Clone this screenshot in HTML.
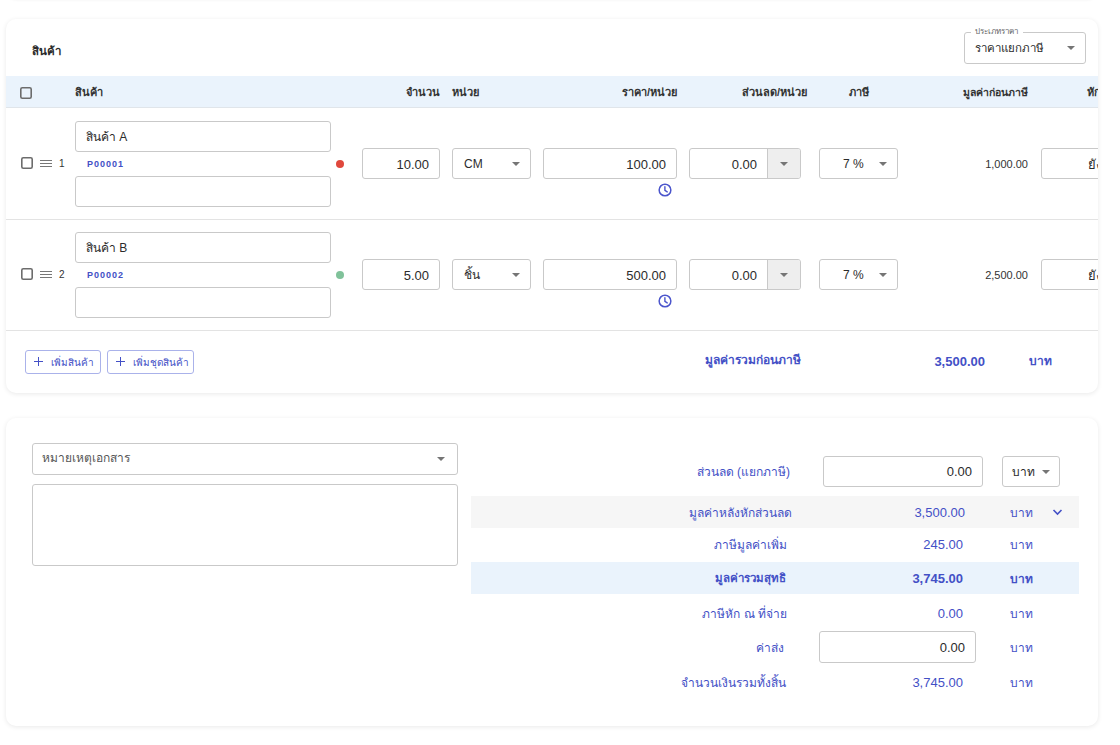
<!DOCTYPE html>
<html><head><meta charset="utf-8">
<style>
*{box-sizing:border-box;margin:0;padding:0}
html,body{width:1120px;height:745px;overflow:hidden;background:#fff;font-family:"Liberation Sans",sans-serif;color:#333;position:relative}
.a{position:absolute}
.card{position:absolute;left:6px;width:1092px;background:#fff;border-radius:10px;box-shadow:0 1px 5px rgba(0,0,0,0.09);overflow:hidden}
.inp{position:absolute;border:1px solid #c9c9c9;border-radius:3px;background:#fff}
.t{position:absolute;white-space:nowrap;line-height:1}
.r{text-align:right}
.blue{color:#4350c6}
.arrow{position:absolute;width:0;height:0;border-left:4px solid transparent;border-right:4px solid transparent;border-top:4px solid #757575}
.cb{position:absolute;width:12px;height:12px}
.hd{position:absolute;white-space:nowrap;line-height:1;font-size:11px;font-weight:bold;color:#333;top:87px}
</style></head><body>
<div class="card" style="top:-41px;height:41px;box-shadow:0 0 3px rgba(0,0,0,0.06)"></div>
<div class="card" style="top:19px;height:374px"><div class="a" style="left:-6px;top:-19px;width:1120px;height:745px">
<div class="t" style="left:32px;top:46px;font-size:11.5px;font-weight:bold;color:#2b2b2b">สินค้า</div>
<div class="inp" style="left:964px;top:32px;width:122px;height:32px"></div>
<div class="t" style="left:971px;top:28px;font-size:8px;color:#666;background:#fff;padding:0 5px 0 4px">ประเภทราคา</div>
<div class="t" style="left:975px;top:43px;font-size:11.5px;color:#2b2b2b">ราคาแยกภาษี</div>
<div class="arrow" style="left:1067px;top:46px"></div>
<div class="a" style="left:6px;top:76px;width:1092px;height:32px;background:#eaf3fc;border-bottom:1px solid #e0e5ea"></div>
<svg class="cb" style="left:20px;top:87px" viewBox="0 0 12 12"><rect x="0.8" y="0.8" width="10.4" height="10.4" rx="1.5" fill="none" stroke="#6c6c6c" stroke-width="1.6"/></svg>
<div class="hd" style="left:75px">สินค้า</div>
<div class="hd r" style="left:340px;width:100px">จำนวน</div>
<div class="hd" style="left:452px">หน่วย</div>
<div class="hd r" style="left:577px;width:100px">ราคา/หน่วย</div>
<div class="hd r" style="left:707px;width:100px">ส่วนลด/หน่วย</div>
<div class="hd" style="left:849px">ภาษี</div>
<div class="hd r" style="left:908px;width:120px;font-size:10.5px">มูลค่าก่อนภาษี</div>
<div class="hd" style="left:1087px">หัก</div>
<svg class="cb" style="left:21px;top:157px" viewBox="0 0 12 12"><rect x="0.8" y="0.8" width="10.4" height="10.4" rx="1.5" fill="none" stroke="#6c6c6c" stroke-width="1.6"/></svg>
<div class="a" style="left:40px;top:160px;width:12px;height:1px;background:#777"></div>
<div class="a" style="left:40px;top:163px;width:12px;height:1px;background:#777"></div>
<div class="a" style="left:40px;top:166px;width:12px;height:1px;background:#777"></div>
<div class="t" style="left:59px;top:159px;font-size:10px;color:#333">1</div>
<div class="inp" style="left:75px;top:121px;width:256px;height:31px"></div>
<div class="t" style="left:86px;top:131px;font-size:12px;color:#2b2b2b">สินค้า A</div>
<div class="t blue" style="left:87px;top:160px;font-size:9px;font-weight:bold;letter-spacing:1px">P00001</div>
<div class="inp" style="left:75px;top:176px;width:256px;height:31px"></div>
<div class="a" style="left:336px;top:159.5px;width:8px;height:8px;border-radius:50%;background:#e0483c"></div>
<div class="inp" style="left:362px;top:148px;width:78px;height:31px"></div>
<div class="t r" style="left:362px;width:67px;top:158px;font-size:13px;color:#2b2b2b">10.00</div>
<div class="inp" style="left:452px;top:148px;width:79px;height:31px"></div>
<div class="t" style="left:464px;top:158px;font-size:12px;color:#2b2b2b">CM</div>
<div class="arrow" style="left:512px;top:162px"></div>
<div class="inp" style="left:543px;top:148px;width:134px;height:31px"></div>
<div class="t r" style="left:543px;width:123px;top:158px;font-size:13px;color:#2b2b2b">100.00</div>
<svg class="a" style="left:658.3px;top:183.4px" width="14" height="14" viewBox="0 0 14 14"><circle cx="7" cy="7" r="5.85" fill="none" stroke="#4b55cc" stroke-width="1.5"/><path d="M6.9 3.8v3.5l2.3 1.6" fill="none" stroke="#4b55cc" stroke-width="1.4" stroke-linecap="round"/></svg>
<div class="inp" style="left:689px;top:148px;width:112px;height:31px;overflow:hidden"><div class="a" style="left:77px;top:0;width:35px;height:29px;background:#eeeeee;border-left:1px solid #c9c9c9"></div></div>
<div class="t r" style="left:689px;width:68px;top:158px;font-size:13px;color:#2b2b2b">0.00</div>
<div class="arrow" style="left:780px;top:162px"></div>
<div class="inp" style="left:819px;top:148px;width:79px;height:31px"></div>
<div class="t" style="left:843px;top:158px;font-size:12px;color:#2b2b2b">7 %</div>
<div class="arrow" style="left:879px;top:162px"></div>
<div class="t r" style="left:928px;width:100px;top:159px;font-size:11px;color:#333">1,000.00</div>
<div class="inp" style="left:1041px;top:148px;width:100px;height:31px"></div>
<div class="t" style="left:1088px;top:158px;font-size:13px;color:#2b2b2b">ยังไม่</div>
<div class="a" style="left:6px;top:219px;width:1092px;height:1px;background:#e3e3e3"></div>
<svg class="cb" style="left:21px;top:268px" viewBox="0 0 12 12"><rect x="0.8" y="0.8" width="10.4" height="10.4" rx="1.5" fill="none" stroke="#6c6c6c" stroke-width="1.6"/></svg>
<div class="a" style="left:40px;top:271px;width:12px;height:1px;background:#777"></div>
<div class="a" style="left:40px;top:274px;width:12px;height:1px;background:#777"></div>
<div class="a" style="left:40px;top:277px;width:12px;height:1px;background:#777"></div>
<div class="t" style="left:59px;top:270px;font-size:10px;color:#333">2</div>
<div class="inp" style="left:75px;top:232px;width:256px;height:31px"></div>
<div class="t" style="left:86px;top:242px;font-size:12px;color:#2b2b2b">สินค้า B</div>
<div class="t blue" style="left:87px;top:271px;font-size:9px;font-weight:bold;letter-spacing:1px">P00002</div>
<div class="inp" style="left:75px;top:287px;width:256px;height:31px"></div>
<div class="a" style="left:336px;top:270.5px;width:8px;height:8px;border-radius:50%;background:#80c29a"></div>
<div class="inp" style="left:362px;top:259px;width:78px;height:31px"></div>
<div class="t r" style="left:362px;width:67px;top:269px;font-size:13px;color:#2b2b2b">5.00</div>
<div class="inp" style="left:452px;top:259px;width:79px;height:31px"></div>
<div class="t" style="left:464px;top:269px;font-size:12px;color:#2b2b2b">ชิ้น</div>
<div class="arrow" style="left:512px;top:273px"></div>
<div class="inp" style="left:543px;top:259px;width:134px;height:31px"></div>
<div class="t r" style="left:543px;width:123px;top:269px;font-size:13px;color:#2b2b2b">500.00</div>
<svg class="a" style="left:658.3px;top:294.4px" width="14" height="14" viewBox="0 0 14 14"><circle cx="7" cy="7" r="5.85" fill="none" stroke="#4b55cc" stroke-width="1.5"/><path d="M6.9 3.8v3.5l2.3 1.6" fill="none" stroke="#4b55cc" stroke-width="1.4" stroke-linecap="round"/></svg>
<div class="inp" style="left:689px;top:259px;width:112px;height:31px;overflow:hidden"><div class="a" style="left:77px;top:0;width:35px;height:29px;background:#eeeeee;border-left:1px solid #c9c9c9"></div></div>
<div class="t r" style="left:689px;width:68px;top:269px;font-size:13px;color:#2b2b2b">0.00</div>
<div class="arrow" style="left:780px;top:273px"></div>
<div class="inp" style="left:819px;top:259px;width:79px;height:31px"></div>
<div class="t" style="left:843px;top:269px;font-size:12px;color:#2b2b2b">7 %</div>
<div class="arrow" style="left:879px;top:273px"></div>
<div class="t r" style="left:928px;width:100px;top:270px;font-size:11px;color:#333">2,500.00</div>
<div class="inp" style="left:1041px;top:259px;width:100px;height:31px"></div>
<div class="t" style="left:1088px;top:269px;font-size:13px;color:#2b2b2b">ยังไม่</div>

<div class="a" style="left:6px;top:330px;width:1092px;height:1px;background:#e3e3e3"></div>
<div class="inp" style="left:25px;top:350px;width:76px;height:24px;border-color:#aab2ea;border-radius:3px"></div>
<div class="a" style="left:34px;top:361px;width:9px;height:1.3px;background:#4350c6"></div>
<div class="a" style="left:37.9px;top:357px;width:1.3px;height:9px;background:#4350c6"></div>
<div class="t blue" style="left:51px;top:358px;font-size:10px">เพิ่มสินค้า</div>
<div class="inp" style="left:107px;top:350px;width:87px;height:24px;border-color:#aab2ea;border-radius:3px"></div>
<div class="a" style="left:116px;top:361px;width:9px;height:1.3px;background:#4350c6"></div>
<div class="a" style="left:119.9px;top:357px;width:1.3px;height:9px;background:#4350c6"></div>
<div class="t blue" style="left:133px;top:358px;font-size:10px">เพิ่มชุดสินค้า</div>
<div class="t r blue" style="left:650px;width:151px;top:354px;font-size:12px;font-weight:bold">มูลค่ารวมก่อนภาษี</div>
<div class="t r blue" style="left:885px;width:100px;top:355px;font-size:13px;font-weight:bold">3,500.00</div>
<div class="t blue" style="left:1029px;top:355px;font-size:12px;font-weight:bold">บาท</div>
</div></div>
<div class="card" style="top:418px;height:308px"><div class="a" style="left:-6px;top:-418px;width:1120px;height:1145px">
<div class="inp" style="left:32px;top:443px;width:426px;height:32px"></div>
<div class="t" style="left:42px;top:452px;font-size:12px;color:#555">หมายเหตุเอกสาร</div>
<div class="arrow" style="left:437px;top:457px"></div>
<div class="inp" style="left:32px;top:484px;width:426px;height:82px"></div>
<div class="a" style="left:471px;top:496px;width:608px;height:32px;background:#f6f6f6"></div>
<div class="a" style="left:471px;top:562px;width:608px;height:32px;background:#eaf3fc"></div>
<div class="t r blue" style="left:590px;width:200px;top:466px;font-size:12px">ส่วนลด (แยกภาษี)</div>
<div class="inp" style="left:823px;top:456px;width:160px;height:31px"></div>
<div class="t r" style="left:823px;width:149px;top:465px;font-size:13px;color:#2b2b2b">0.00</div>
<div class="inp" style="left:1002px;top:456px;width:58px;height:31px"></div>
<div class="t" style="left:1012px;top:466px;font-size:12px;color:#2b2b2b">บาท</div>
<div class="arrow" style="left:1042px;top:470px"></div>
<div class="t r blue" style="left:592px;width:200px;top:507px;font-size:12px">มูลค่าหลังหักส่วนลด</div>
<div class="t r blue" style="left:865px;width:100px;top:506px;font-size:13px">3,500.00</div>
<div class="t blue" style="left:1010px;top:507px;font-size:12px">บาท</div>
<div class="t r blue" style="left:587px;width:200px;top:539px;font-size:12px">ภาษีมูลค่าเพิ่ม</div>
<div class="t r blue" style="left:863px;width:100px;top:538px;font-size:13px">245.00</div>
<div class="t blue" style="left:1010px;top:539px;font-size:12px">บาท</div>
<div class="t r blue" style="left:586px;width:200px;top:573px;font-size:11.5px;font-weight:bold">มูลค่ารวมสุทธิ</div>
<div class="t r blue" style="left:863px;width:100px;top:572px;font-size:13px;font-weight:bold">3,745.00</div>
<div class="t blue" style="left:1010px;top:573px;font-size:12px;font-weight:bold">บาท</div>
<div class="t r blue" style="left:587px;width:200px;top:608px;font-size:12px">ภาษีหัก ณ ที่จ่าย</div>
<div class="t r blue" style="left:863px;width:100px;top:607px;font-size:13px">0.00</div>
<div class="t blue" style="left:1010px;top:608px;font-size:12px">บาท</div>
<div class="t r blue" style="left:584px;width:200px;top:642px;font-size:12px">ค่าส่ง</div>
<div class="t blue" style="left:1010px;top:642px;font-size:12px">บาท</div>
<div class="t r blue" style="left:586px;width:200px;top:677px;font-size:12px">จำนวนเงินรวมทั้งสิ้น</div>
<div class="t r blue" style="left:863px;width:100px;top:676px;font-size:13px">3,745.00</div>
<div class="t blue" style="left:1010px;top:677px;font-size:12px">บาท</div>

<svg class="a" style="left:1052px;top:508px" width="11" height="9" viewBox="0 0 11 9"><path d="M1.5 2l4 4 4-4" fill="none" stroke="#4350c6" stroke-width="1.6"/></svg>
<div class="inp" style="left:819px;top:631px;width:157px;height:32px"></div>
<div class="t r" style="left:819px;width:146px;top:641px;font-size:13px;color:#2b2b2b">0.00</div>
</div></div>
</body></html>
